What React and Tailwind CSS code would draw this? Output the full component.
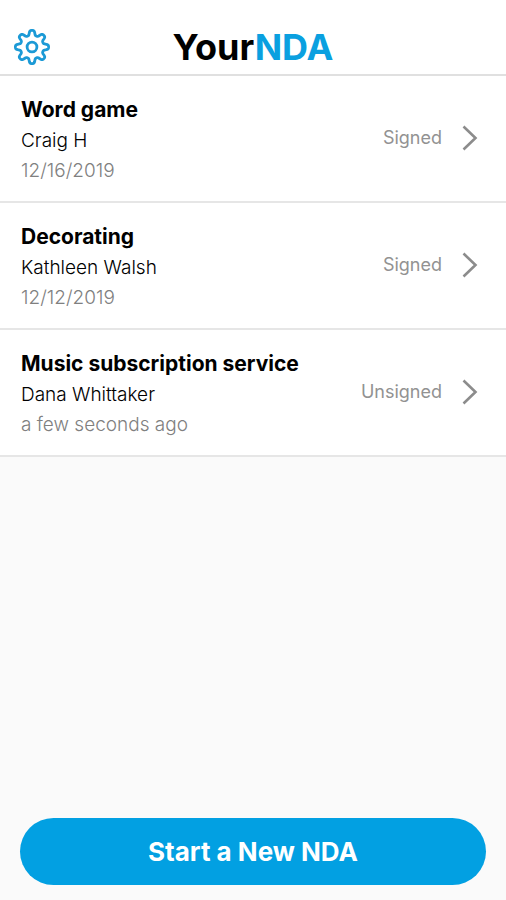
import React from "react";

const agreements = [
  { title: "Word game", name: "Craig H", date: "12/16/2019", status: "Signed" },
  { title: "Decorating", name: "Kathleen Walsh", date: "12/12/2019", status: "Signed" },
  { title: "Music subscription service", name: "Dana Whittaker", date: "a few seconds ago", status: "Unsigned" },
];

// Outline of an eight-toothed cog centred on (18, 18).
function cogPath() {
  const points = [];
  for (let i = 0; i <= 240; i++) {
    const a = (i / 240) * Math.PI * 2;
    const wave = Math.tanh(1.8 * Math.cos(8 * a)) / Math.tanh(1.8);
    const r = 14.2 + 2.4 * wave;
    points.push(`${(18 + r * Math.sin(a)).toFixed(2)} ${(18 - r * Math.cos(a)).toFixed(2)}`);
  }
  return `M${points.join("L")}Z`;
}

function Gear() {
  return (
    <svg viewBox="0 0 36 36" className="size-9" fill="none" stroke="currentColor" strokeWidth="2.8" strokeLinejoin="round" aria-hidden="true">
      <path d={cogPath()} />
      <circle cx="18" cy="18" r="4.9" />
    </svg>
  );
}

function Chevron() {
  return (
    <svg viewBox="0 0 16 26" className="h-[26px] w-4 shrink-0 text-[#8c8c8c]" fill="none" stroke="currentColor" strokeWidth="2.6" aria-hidden="true">
      <path d="M1.5 1.5L13.5 13L1.5 24.5" />
    </svg>
  );
}

export default function App() {
  return (
    <div className="flex min-h-screen flex-col bg-[#fafafa] font-['Inter',sans-serif] text-black">
      <header className="grid h-[76px] grid-cols-[36px_1fr_36px] items-center border-b-2 border-[#e0e0e0] bg-white px-3.5 pt-5">
        <button type="button" aria-label="Settings" className="text-[#1c9ad6]">
          <Gear />
        </button>
        <h1 className="text-center text-4xl font-bold">
          Your<span className="text-[#0aa0e0]">NDA</span>
        </h1>
      </header>
      <main className="flex-1">
        <ul>
          {agreements.map((item) => (
            <li key={item.title} className="border-b-2 border-[#e6e6e6] bg-white">
              <button type="button" className="flex h-[125px] w-full items-center justify-between pr-7 pl-[21px] text-left">
                <span className="flex flex-col pt-0.5">
                  <span className="text-[21px] leading-8 font-bold">{item.title}</span>
                  <span className="text-[19px] leading-[30px] font-light">{item.name}</span>
                  <span className="text-[19px] leading-[30px] font-light text-[#808080]">{item.date}</span>
                </span>
                <span className="flex items-center gap-5 pb-0.5 text-lg text-[#929292]">
                  {item.status}
                  <Chevron />
                </span>
              </button>
            </li>
          ))}
        </ul>
      </main>
      <footer className="px-5 pb-[15px]">
        <button type="button" className="h-[67px] w-full rounded-full bg-[#02a0e2] text-[26px] font-bold text-white">
          Start a New NDA
        </button>
      </footer>
    </div>
  );
}
